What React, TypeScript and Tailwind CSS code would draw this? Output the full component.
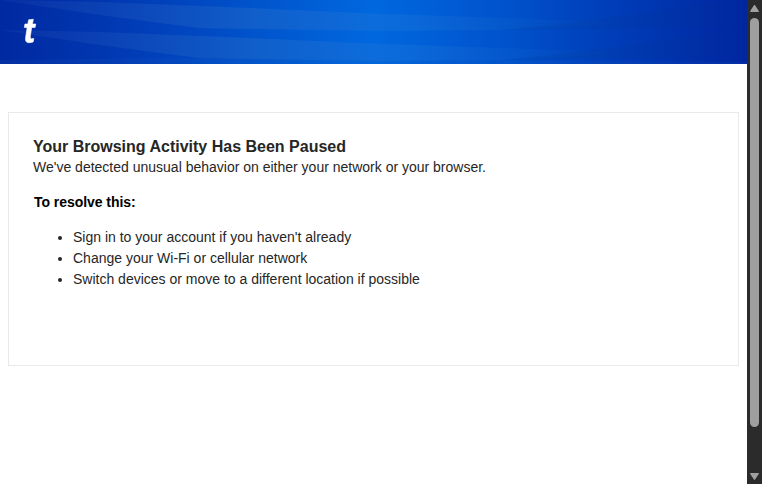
const FONT = "font-['Liberation_Sans',Arial,sans-serif]";

const steps = [
  "Sign in to your account if you haven't already",
  'Change your Wi-Fi or cellular network',
  'Switch devices or move to a different location if possible',
];

function Wave() {
  return (
    <>
      <path d="M0 0L100 2L250 8L360 13L500 18L640 23L500 30L380 31L250 29L200 28L160 23L100 15L60 9Z" fill="url(#light)" />
      <path d="M500 30Q600 21 747 -3V25Q620 30 500 30Z" fill="url(#dark)" />
    </>
  );
}

function Header() {
  return (
    <header className="relative flex h-16 items-center bg-[linear-gradient(90deg,#0029a0_0%,#0036b0_13%,#0046c0_25%,#0054cc_34%,#0068df_50%,#0052cc_68%,#003db8_82%,#0026a0_100%)]">
      <svg className="absolute inset-0 h-full w-full" viewBox="0 0 747 64" preserveAspectRatio="none" aria-hidden="true">
        <defs>
          <linearGradient id="light">
            <stop offset="0" stopColor="#3058b8" stopOpacity=".15" />
            <stop offset=".4" stopColor="#2a70c8" stopOpacity=".38" />
            <stop offset=".65" stopColor="#2478d8" stopOpacity=".3" />
            <stop offset="1" stopColor="#1060b8" stopOpacity="0" />
          </linearGradient>
          <linearGradient id="dark">
            <stop offset="0" stopColor="#0048a8" stopOpacity=".3" />
            <stop offset="1" stopColor="#002898" stopOpacity=".18" />
          </linearGradient>
        </defs>
        <Wave />
        <g transform="translate(0 30)">
          <Wave />
        </g>
        <path d="M0 60L180 58L747 62V64H0Z" fill="#2060c0" fillOpacity=".12" />
      </svg>
      <svg className="relative -top-px ml-[24px] h-6 w-3 overflow-visible" viewBox="0 0 12 24" aria-label="t" role="img">
        <path d="M4.6 0.8L9.4 .3L8.4 5H11.8L11.1 8.5H7.7L6.3 17.6Q6 19.8 7.5 19.8L9.8 19.4L9.2 22.9Q7.2 23.7 5 23.7Q1 23.7 1.5 19.3L3.1 8.5H.3L.9 5H3.8Z" fill="#fff" stroke="#fff" strokeWidth=".6" strokeLinejoin="round" />
      </svg>
    </header>
  );
}

function ScrollBar() {
  return (
    <div className="flex w-[15px] shrink-0 flex-col items-center bg-[#2b2b2b]">
      <svg className="mt-[4px] h-[9px] w-[11px] shrink-0" viewBox="0 0 11 9" aria-hidden="true">
        <path d="M5.5 1.7L9.2 7.3H1.8Z" fill="#a0a0a0" stroke="#a0a0a0" strokeWidth="1.4" strokeLinejoin="round" />
      </svg>
      <div className="mt-[5px] h-[409px] w-[9px] shrink-0 rounded-full bg-[#9f9f9f]" />
      <svg className="mt-auto mb-[3px] h-[9px] w-[11px] shrink-0" viewBox="0 0 11 9" aria-hidden="true">
        <path d="M5.5 7.2L9.2 1.7H1.8Z" fill="#a0a0a0" stroke="#a0a0a0" strokeWidth="1.4" strokeLinejoin="round" />
      </svg>
    </div>
  );
}

export default function App() {
  return (
    <div className={`flex h-screen overflow-hidden bg-white ${FONT}`}>
      <div className="min-w-0 flex-1">
        <Header />
        <main className="mx-2 mt-12 h-[254px] border border-[#e9e9e9] px-6 pt-[23px] text-sm leading-[21px] text-[#262626]">
          <h1 className="text-base leading-[21px] font-bold">Your Browsing Activity Has Been Paused</h1>
          <p>We've detected unusual behavior on either your network or your browser.</p>
          <p className="mt-3.5 pl-px font-bold tracking-[-0.05px] text-black">To resolve this:</p>
          <ul className="mt-3.5 list-disc pl-10">
            {steps.map((step) => (
              <li key={step}>{step}</li>
            ))}
          </ul>
        </main>
      </div>
      <ScrollBar />
    </div>
  );
}
